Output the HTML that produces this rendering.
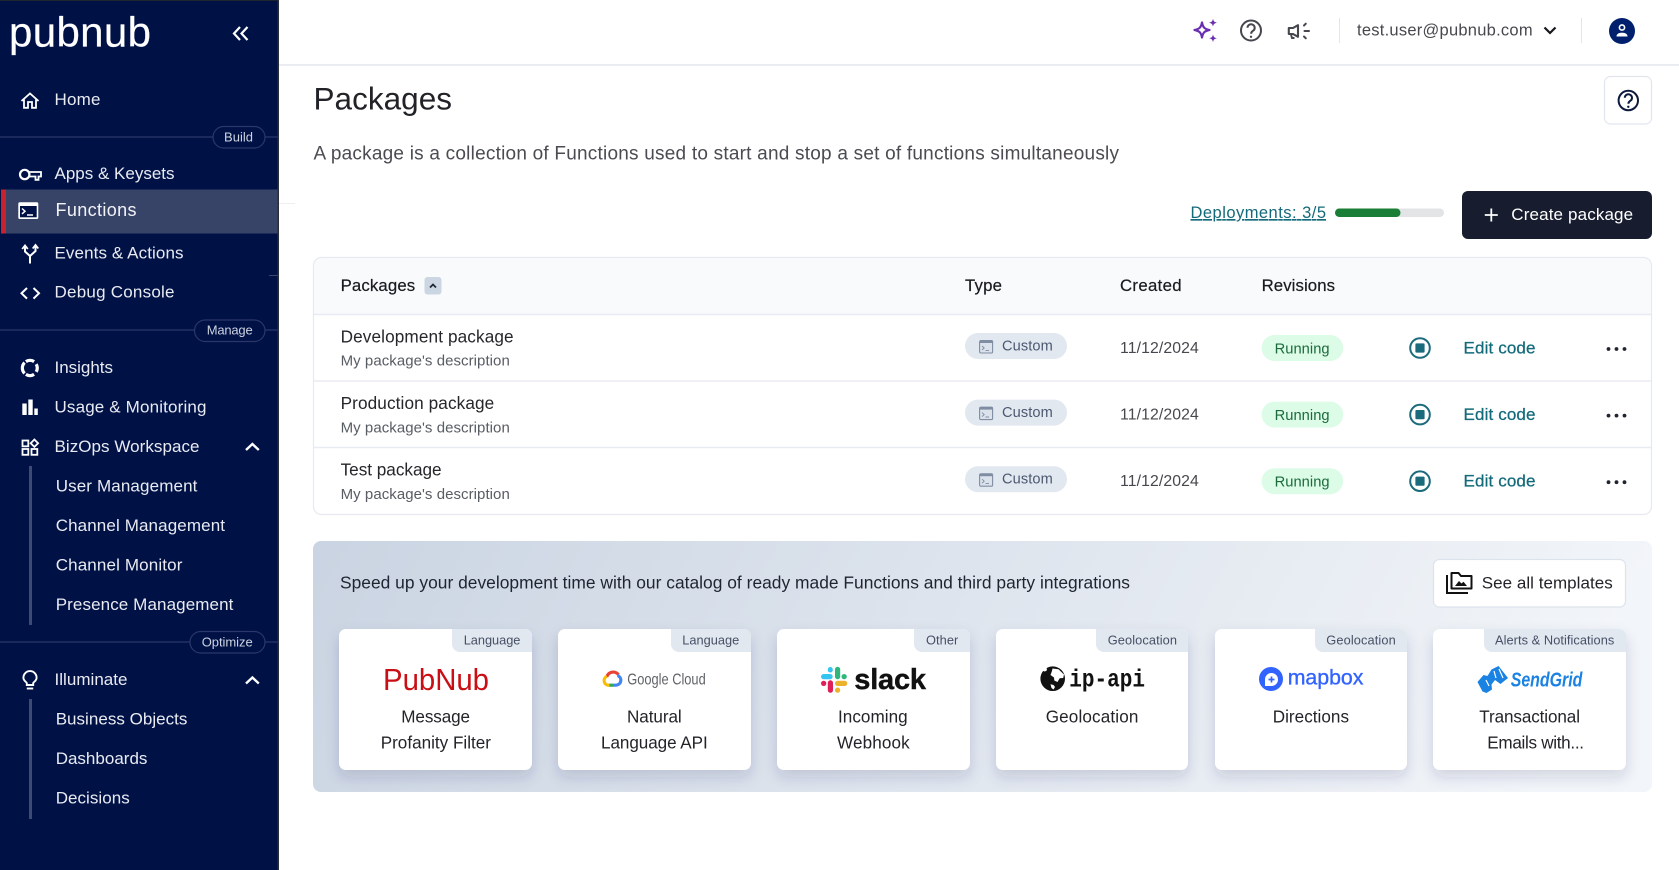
<!DOCTYPE html>
<html lang="en">
<head>
<meta charset="utf-8">
<title>Packages</title>
<style>
html,body{margin:0;padding:0;width:1679px;height:870px;overflow:hidden;background:#fff}
svg{display:block}
text{font-family:"Liberation Sans",Arial,sans-serif;white-space:pre}
.nav{font-size:17px;fill:#e9ebf1}
.sec{font-size:13px;fill:#cdd3e0}
.th{font-size:16.8px;fill:#1b1b1f;stroke:#1b1b1f;stroke-width:.2px}
.nm{font-size:17.2px;fill:#26262b}
.ds{font-size:15px;fill:#585c63}
.cu{font-size:14.6px;fill:#4b5870}
.dt{font-size:15.8px;fill:#46484d}
.ru{font-size:14.7px;fill:#1b6b3c}
.ed{font-size:17px;fill:#136a7a;stroke:#136a7a;stroke-width:.25px}
.ct{font-size:17.1px;fill:#232429}
.tg{font-size:12.8px;fill:#475066}
</style>
</head>
<body>
<svg width="1679" height="870" viewBox="0 0 1679 870" xmlns="http://www.w3.org/2000/svg">
<defs>
<linearGradient id="bn" x1="0" y1="0" x2="1" y2="0.1">
<stop offset="0" stop-color="#cad4e2"/><stop offset="1" stop-color="#f2f5f9"/>
</linearGradient>
<filter id="sh" x="-20%" y="-20%" width="140%" height="150%">
<feDropShadow dx="0" dy="7" stdDeviation="7" flood-color="#24365f" flood-opacity=".16"/>
</filter>
<g id="term">
<rect x="0.6" y="0.6" width="13" height="12.4" rx="1.2" fill="#dbe2ec" stroke="#7f8ca2" stroke-width="1.1"/>
<rect x="0.6" y="0.6" width="13" height="2.4" fill="#7f8ca2"/>
<path d="M3 6l2.200 2L3 10M6.500 10.400h3.500" fill="none" stroke="#7f8ca2" stroke-width=".9"/>
</g>
<g id="stop">
<circle cx="0" cy="0" r="9.800" fill="none" stroke="#1a6b7c" stroke-width="2"/>
<rect x="-4.600" y="-4.600" width="9.200" height="9.200" rx="1" fill="#1a6b7c"/>
</g>
<g id="dots" fill="#1f2430"><circle cx="-8" cy="0" r="1.900"/><circle cx="0" cy="0" r="1.900"/><circle cx="8" cy="0" r="1.900"/></g>
</defs>

<rect width="1679" height="870" fill="#fff"/>

<!-- top bar -->
<rect x="278" y="64" width="1401" height="2" fill="#e9ecf1"/>
<rect x="278" y="203" width="17" height="1" fill="#eceef2"/>
<path d="M1202 22.500c1 5 2.500 6.500 7.500 7.500c-5 1-6.500 2.500-7.500 7.500c-1-5-2.500-6.500-7.500-7.500c5-1 6.500-2.500 7.500-7.500z" fill="none" stroke="#6a2fb0" stroke-width="2.200" stroke-linejoin="round"/>
<path d="M1213 18.800c.6 2.600 1.300 3.300 3.900 3.900c-2.600.6-3.300 1.300-3.900 3.900c-.6-2.600-1.300-3.300-3.900-3.900c2.600-.6 3.300-1.300 3.900-3.900z" fill="#6a2fb0"/>
<path d="M1213 34.400c.6 2.600 1.300 3.300 3.900 3.900c-2.600.6-3.300 1.300-3.900 3.900c-.6-2.600-1.300-3.300-3.900-3.900c2.600-.6 3.300-1.300 3.900-3.900z" fill="#6a2fb0"/>
<circle cx="1251" cy="30.500" r="10" fill="none" stroke="#44474d" stroke-width="2"/>
<path d="M1247.500 27.800a3.600 3.500 0 1 1 5.600 2.900c-1.300.9-2 1.500-2 3" fill="none" stroke="#44474d" stroke-width="2"/>
<circle cx="1251" cy="36.800" r="1.200" fill="#44474d"/>
<path d="M1288.800 28h4.200l5-2.800v11.600l-5-2.800h-4.200z" fill="none" stroke="#44474d" stroke-width="2.100" stroke-linejoin="round"/>
<path d="M1291 34.500l1 3.500h2.500" fill="none" stroke="#44474d" stroke-width="1.900"/>
<path d="M1304 25.500l1.800-1.800M1304.500 31h4.500M1304 36.500l1.800 1.800" stroke="#44474d" stroke-width="2" stroke-linecap="round"/>
<rect x="1339" y="18" width="1" height="25" fill="#e2e5ea"/>
<text x="1357" y="35.500" textLength="175.600" font-size="16.500" fill="#46484d">test.user@pubnub.com</text>
<path d="M1544.500 27.500l5.500 5.500l5.500-5.500" fill="none" stroke="#16181d" stroke-width="2.200"/>
<rect x="1581" y="18" width="1" height="25" fill="#e2e5ea"/>
<circle cx="1622" cy="31" r="13" fill="#00206e"/>
<circle cx="1622" cy="27.500" r="2.600" fill="none" stroke="#fff" stroke-width="1.600"/>
<path d="M1616.500 36.500c0-2.500 2-3.800 5.500-3.800s5.500 1.300 5.500 3.800z" fill="#fff"/>

<!-- page heading -->
<text x="313.500" y="109.500" textLength="138.500" font-size="31.500" fill="#222328">Packages</text>
<text x="313.500" y="159.500" textLength="805.500" font-size="19" fill="#4a4c52">A package is a collection of Functions used to start and stop a set of functions simultaneously</text>
<rect x="1604.500" y="76.500" width="47" height="47.500" rx="6" fill="#fff" stroke="#e1e6ee" stroke-width="1.200"/>
<circle cx="1628.300" cy="100.500" r="9.700" fill="none" stroke="#0e1a3d" stroke-width="2"/>
<path d="M1624.800 97.800a3.600 3.500 0 1 1 5.600 2.900c-1.300.9-2 1.500-2 3" fill="none" stroke="#0e1a3d" stroke-width="2"/>
<circle cx="1628.300" cy="106.800" r="1.200" fill="#0e1a3d"/>

<!-- deployments -->
<text x="1190.500" y="218" textLength="135.500" font-size="16.500" fill="#136a7a" text-decoration="underline">Deployments: 3/5</text>
<rect x="1335" y="208.500" width="109" height="8.500" rx="4.200" fill="#e3e4e6"/>
<rect x="1335" y="208.500" width="65.500" height="8.500" rx="4.200" fill="#1b7e36"/>
<rect x="1462" y="191" width="190" height="48" rx="6" fill="#171d2f"/>
<path d="M1491.300 208.500v13M1484.800 215h13" stroke="#fff" stroke-width="1.800"/>
<text x="1511.300" y="220" textLength="121.800" font-size="17" fill="#fff">Create package</text>

<!-- packages table -->
<rect x="313.500" y="257.500" width="1338" height="257" rx="8" fill="#fff" stroke="#e6eaf0" stroke-width="1.200"/>
<path d="M314 314V266a8 8 0 0 1 8-8H1643a8 8 0 0 1 8 8V314z" fill="#f8fafc"/>
<path d="M314 314.500H1651M314 381H1651M314 447.500H1651" stroke="#e8ecf2" stroke-width="1.500"/>
<text class="th" x="340.600" y="291" textLength="74.600">Packages</text>
<rect x="424.500" y="277" width="17" height="17.500" rx="3" fill="#ccd6e3"/>
<path d="M430 287.500l3-3l3 3" fill="none" stroke="#1d2433" stroke-width="1.700"/>
<text class="th" x="965" y="291" textLength="37">Type</text>
<text class="th" x="1120" y="291" textLength="61.600">Created</text>
<text class="th" x="1261.600" y="291" textLength="73.400">Revisions</text>

<!-- row 1 -->
<text class="nm" x="340.600" y="342.300" textLength="173">Development package</text>
<text class="ds" x="340.600" y="365.700" textLength="169.200">My package's description</text>
<rect x="965" y="333" width="102" height="26" rx="13" fill="#e2e8f0"/>
<use href="#term" x="979" y="340"/>
<text class="cu" x="1002" y="350.300" textLength="50.800">Custom</text>
<text class="dt" x="1120" y="353" textLength="78.800">11/12/2024</text>
<rect x="1261.600" y="335" width="81.600" height="26" rx="13" fill="#dcfce7"/>
<text class="ru" x="1274.600" y="353.300" textLength="55">Running</text>
<use href="#stop" x="1420" y="348"/>
<text class="ed" x="1463.500" y="353.500" textLength="72">Edit code</text>
<use href="#dots" x="1616.500" y="349"/>

<!-- row 2 -->
<text class="nm" x="340.600" y="409" textLength="153.600">Production package</text>
<text class="ds" x="340.600" y="432.300" textLength="169.200">My package's description</text>
<rect x="965" y="399.600" width="102" height="26" rx="13" fill="#e2e8f0"/>
<use href="#term" x="979" y="406.600"/>
<text class="cu" x="1002" y="416.900" textLength="50.800">Custom</text>
<text class="dt" x="1120" y="419.600" textLength="78.800">11/12/2024</text>
<rect x="1261.600" y="401.600" width="81.600" height="26" rx="13" fill="#dcfce7"/>
<text class="ru" x="1274.600" y="419.900" textLength="55">Running</text>
<use href="#stop" x="1420" y="414.600"/>
<text class="ed" x="1463.500" y="420.100" textLength="72">Edit code</text>
<use href="#dots" x="1616.500" y="415.600"/>

<!-- row 3 -->
<text class="nm" x="340.600" y="475.600" textLength="101">Test package</text>
<text class="ds" x="340.600" y="499" textLength="169.200">My package's description</text>
<rect x="965" y="466.200" width="102" height="26" rx="13" fill="#e2e8f0"/>
<use href="#term" x="979" y="473.200"/>
<text class="cu" x="1002" y="483.500" textLength="50.800">Custom</text>
<text class="dt" x="1120" y="486.200" textLength="78.800">11/12/2024</text>
<rect x="1261.600" y="468.200" width="81.600" height="26" rx="13" fill="#dcfce7"/>
<text class="ru" x="1274.600" y="486.500" textLength="55">Running</text>
<use href="#stop" x="1420" y="481.200"/>
<text class="ed" x="1463.500" y="486.700" textLength="72">Edit code</text>
<use href="#dots" x="1616.500" y="482.200"/>

<!-- templates banner -->
<rect x="313" y="541" width="1339" height="251" rx="8" fill="url(#bn)"/>
<text x="340" y="588.500" textLength="790" font-size="17.400" fill="#1f2530">Speed up your development time with our catalog of ready made Functions and third party integrations</text>
<rect x="1433.500" y="559.500" width="192" height="47.500" rx="6" fill="#fff" stroke="#dde3ec" stroke-width="1.200"/>
<path d="M1447 575v18h21" fill="none" stroke="#111" stroke-width="2"/>
<path d="M1451.500 588.500V573h7l2.500 3h10.500v12.500z" fill="none" stroke="#111" stroke-width="2" stroke-linejoin="round"/>
<path d="M1455 586l4-5l2.500 2.500l2-1.800l3.500 4.300z" fill="#111"/>
<text x="1481.700" y="588.300" textLength="131" font-size="17" fill="#232429">See all templates</text>

<!-- card 1 -->
<g filter="url(#sh)"><rect x="339" y="629" width="193" height="141" rx="7" fill="#fff"/></g>
<path d="M452 629H525a7 7 0 0 1 7 7v16H460a8 8 0 0 1-8-8z" fill="#e2e8f0"/>
<text class="tg" x="463.700" y="644.300" textLength="56.700">Language</text>
<text x="383" y="690" textLength="106" lengthAdjust="spacingAndGlyphs" font-size="31" fill="#c90f14">PubNub</text>
<text class="ct" x="401.300" y="722.300" textLength="68.700">Message</text>
<text class="ct" x="380.700" y="748.700" textLength="110.300">Profanity Filter</text>

<!-- card 2 -->
<g filter="url(#sh)"><rect x="558" y="629" width="193" height="141" rx="7" fill="#fff"/></g>
<path d="M671 629H744a7 7 0 0 1 7 7v16H679a8 8 0 0 1-8-8z" fill="#e2e8f0"/>
<text class="tg" x="682.300" y="644.300" textLength="57">Language</text>
<g fill="none" stroke-width="3.200">
<path d="M606.800 677A6.600 6.600 0 0 1 618.500 674.800" stroke="#ea4335"/>
<path d="M617.500 675.500A5 5 0 0 1 616.200 685.200H612.500" stroke="#4285f4"/>
<path d="M613 685.200H609" stroke="#34a853"/>
<path d="M609.500 685.200A4.700 4.700 0 0 1 606.800 676.300" stroke="#fbbc05"/>
</g>
<text x="627.300" y="684.300" textLength="78.400" lengthAdjust="spacingAndGlyphs" font-size="16" fill="#5f6368">Google Cloud</text>
<text class="ct" x="627" y="722.300" textLength="54.700">Natural</text>
<text class="ct" x="601" y="748.700" textLength="106.700">Language API</text>

<!-- card 3 -->
<g filter="url(#sh)"><rect x="777" y="629" width="193" height="141" rx="7" fill="#fff"/></g>
<path d="M914 629H963a7 7 0 0 1 7 7v16H922a8 8 0 0 1-8-8z" fill="#e2e8f0"/>
<text class="tg" x="926" y="644.300" textLength="32.300">Other</text>
<rect x="821" y="674" width="11.700" height="5.300" rx="2.650" fill="#36c5f0"/>
<rect x="827.800" y="667" width="5" height="5.500" rx="2.500" fill="#36c5f0"/>
<rect x="835" y="666.700" width="5.200" height="12.600" rx="2.600" fill="#2eb67d"/>
<rect x="841.500" y="674" width="5.300" height="5.300" rx="2.600" fill="#2eb67d"/>
<rect x="835" y="680.700" width="12.300" height="5.300" rx="2.650" fill="#ecb22e"/>
<rect x="835" y="687.500" width="5.200" height="5.300" rx="2.600" fill="#ecb22e"/>
<rect x="827.800" y="680.300" width="5.200" height="12.500" rx="2.600" fill="#e01e5a"/>
<rect x="821" y="680.700" width="5.300" height="5.300" rx="2.600" fill="#e01e5a"/>
<text x="854.300" y="689" textLength="71.700" font-size="29" font-weight="700" fill="#111" stroke="#111" stroke-width=".4">slack</text>
<text class="ct" x="838" y="722.300" textLength="69.700">Incoming</text>
<text class="ct" x="837" y="748.700" textLength="72.700">Webhook</text>

<!-- card 4 -->
<g filter="url(#sh)"><rect x="996" y="629" width="192" height="141" rx="7" fill="#fff"/></g>
<path d="M1096 629H1181a7 7 0 0 1 7 7v16H1104a8 8 0 0 1-8-8z" fill="#e2e8f0"/>
<text class="tg" x="1107.700" y="644.300" textLength="69.300">Geolocation</text>
<circle cx="1052.700" cy="678.700" r="12.300" fill="#111"/>
<path d="M1052.500 668.500l6 .8l5.500 5.200l-.8 3.500l-3.500.2l-2.200 3.800l-3.200-1.500l-.3-3l-3.500-2.500l1.300-3.500zM1050.500 684.200l3 .8l1.500 2l-1.500 2.500l-2-1.500zM1044 668l2.500-.8l.5 3l-2 1.300l-2-.5z" fill="#fff"/>
<text x="1069.300" y="686.700" textLength="75.700" lengthAdjust="spacingAndGlyphs" font-size="25" font-weight="700" fill="#111" style="font-family:'Liberation Mono',monospace">ip-api</text>
<text class="ct" x="1045.700" y="722.300" textLength="92.700">Geolocation</text>

<!-- card 5 -->
<g filter="url(#sh)"><rect x="1215" y="629" width="192" height="141" rx="7" fill="#fff"/></g>
<path d="M1315 629H1400a7 7 0 0 1 7 7v16H1323a8 8 0 0 1-8-8z" fill="#e2e8f0"/>
<text class="tg" x="1326.300" y="644.300" textLength="69.400">Geolocation</text>
<circle cx="1271" cy="679" r="12" fill="#3163ff"/>
<path d="M1265 686v-6.500a6.500 6.500 0 1 1 6.500 6.500z" fill="#fff"/>
<path d="M1271.500 676.500v6M1268.500 679.500h6" stroke="#3163ff" stroke-width="1.700"/>
<text x="1287.700" y="684.300" textLength="75.700" font-size="21.300" fill="#3163ff" stroke="#3163ff" stroke-width=".35">mapbox</text>
<text class="ct" x="1272.700" y="722.300" textLength="76.300">Directions</text>

<!-- card 6 -->
<g filter="url(#sh)"><rect x="1433" y="629" width="193" height="141" rx="7" fill="#fff"/></g>
<path d="M1484 629H1619a7 7 0 0 1 7 7v16H1492a8 8 0 0 1-8-8z" fill="#e2e8f0"/>
<text class="tg" x="1495" y="644.300" textLength="119.300">Alerts &amp; Notifications</text>
<path d="M1477.500 682l6-7l4 1l4-6.500l7-3.500l9.500 12l-7.500 6l-5.500-4l-3.500 4.500l.5 5l-5.500 3.500l-4-1.500z" fill="#1a82e2"/>
<path d="M1486 680l3 6M1494 671l2 7M1499 669l4 9" stroke="#fff" stroke-width="1.200" fill="none"/>
<text x="1510.700" y="686.700" textLength="71.700" lengthAdjust="spacingAndGlyphs" font-size="20" font-weight="700" font-style="italic" fill="#1a82e2">SendGrid</text>
<text class="ct" x="1479.300" y="722.300" textLength="100.700">Transactional</text>
<text class="ct" x="1487.300" y="748.700" textLength="96.700">Emails with...</text>

<!-- sidebar -->
<rect x="0" y="0" width="278" height="870" fill="#001146"/>
<rect x="277.500" y="0" width="1.500" height="870" fill="#2b2f3a"/>
<rect x="0" y="0" width="278" height="1" fill="#20242e"/>
<text x="9" y="46.500" textLength="142" font-size="42" fill="#fff" stroke="#fff" stroke-width=".2">pubnub</text>
<path d="M240 27l-6 6.500l6 6.500M247.500 27l-6 6.500l6 6.500" fill="none" stroke="#fff" stroke-width="2.200"/>

<!-- home -->
<path d="M21.500 101L30 93.500L38.500 101M24 99.500V107.800H28V102H32V107.800H36V99.500" fill="none" stroke="#fff" stroke-width="1.800"/>
<text class="nav" x="54.500" y="105" textLength="46">Home</text>

<!-- build -->
<path d="M0 137H278" stroke="#2a376a" stroke-width="1.200"/>
<rect x="213" y="126.500" width="52" height="21.500" rx="10.700" fill="#001146" stroke="#2a376a" stroke-width="1.200"/>
<text class="sec" x="224" y="141.700" textLength="29">Build</text>

<!-- apps -->
<circle cx="24.700" cy="174.500" r="4.700" fill="none" stroke="#fff" stroke-width="2.200"/>
<path d="M29.500 172H41V176.500H38.500V179.800H35.500V176.500H29.500" fill="none" stroke="#fff" stroke-width="1.800"/>
<text class="nav" x="54.500" y="179" textLength="120">Apps &amp; Keysets</text>

<!-- functions (active) -->
<rect x="6" y="189.500" width="271.500" height="44" fill="#384368"/>
<rect x="1" y="189.500" width="5" height="44" fill="#c8222f"/>
<rect x="18.300" y="202.300" width="20" height="16.700" rx="1.500" fill="#fff"/>
<rect x="20" y="206" width="16.700" height="11.300" fill="#001146"/>
<path d="M22 208.500l3 2.700l-3 2.700M27 215h6" fill="none" stroke="#fff" stroke-width="1.500"/>
<text x="55.500" y="216" textLength="81" font-size="18" fill="#f2f3f7">Functions</text>

<!-- events -->
<path d="M30 263.500V256L25 251.500V246M30 256L35.500 251V245.500" fill="none" stroke="#fff" stroke-width="2"/>
<path d="M22.200 249l2.800-3.500l2.800 3.500M32.700 248.500l2.800-3.500l2.800 3.500" fill="none" stroke="#fff" stroke-width="1.800"/>
<text class="nav" x="54.500" y="258.300" textLength="129">Events &amp; Actions</text>
<rect x="269" y="275" width="9" height="1" fill="#3a4568"/>

<!-- debug -->
<path d="M27 288l-5.500 5.300L27 298.600M33.500 288l5.500 5.300l-5.500 5.300" fill="none" stroke="#fff" stroke-width="2"/>
<text class="nav" x="54.500" y="297.700" textLength="120">Debug Console</text>

<!-- manage -->
<path d="M0 330H278" stroke="#2a376a" stroke-width="1.200"/>
<rect x="194.500" y="320" width="70.500" height="21.500" rx="10.700" fill="#001146" stroke="#2a376a" stroke-width="1.200"/>
<text class="sec" x="206.700" y="334.500" textLength="46">Manage</text>

<!-- insights -->
<g fill="none" stroke="#fff" stroke-width="3.200">
<path d="M24.600 362.600A7.600 7.600 0 0 0 24.600 373.400"/>
<path d="M25.900 361.600A7.600 7.600 0 0 1 34.100 361.600"/>
<path d="M25.900 374.400A7.600 7.600 0 0 0 34.100 374.400"/>
<path d="M36.200 364.200A7.600 7.600 0 0 1 36.200 371.800"/>
</g>
<text class="nav" x="54.500" y="373" textLength="58.500">Insights</text>

<!-- usage -->
<path d="M22.300 403.500h4.400V415h-4.400zM28.300 399.500h4.400V415h-4.400zM34.300 408.500h3.500V415h-3.500z" fill="#fff"/>
<text class="nav" x="54.500" y="412.300" textLength="152">Usage &amp; Monitoring</text>

<!-- bizops -->
<g fill="none" stroke="#fff" stroke-width="1.800">
<rect x="22.500" y="440.500" width="5.800" height="5.800"/>
<rect x="22.500" y="449" width="5.800" height="5.800"/>
<rect x="31.500" y="449" width="5.800" height="5.800"/>
<path d="M34.400 439.500l3.700 3.700l-3.700 3.700l-3.700-3.700z"/>
</g>
<text class="nav" x="54.500" y="452" textLength="145">BizOps Workspace</text>
<path d="M246 450l6.400-6l6.400 6" fill="none" stroke="#fff" stroke-width="2.400"/>
<rect x="29" y="466" width="3" height="159" fill="#3f4a72"/>
<text class="nav" x="55.700" y="491.700" textLength="141.700">User Management</text>
<text class="nav" x="55.700" y="531" textLength="169.300">Channel Management</text>
<text class="nav" x="55.700" y="570.700" textLength="126.700">Channel Monitor</text>
<text class="nav" x="55.700" y="610" textLength="177.700">Presence Management</text>

<!-- optimize -->
<path d="M0 642H278" stroke="#2a376a" stroke-width="1.200"/>
<rect x="190" y="631.500" width="75" height="21.500" rx="10.700" fill="#001146" stroke="#2a376a" stroke-width="1.200"/>
<text class="sec" x="201.700" y="646.300" textLength="51">Optimize</text>

<!-- illuminate -->
<path d="M26.800 685v-1.800c0-1.200-3.400-2.200-3.400-5.500a6.600 6.600 0 1 1 13.200 0c0 3.300-3.400 4.300-3.400 5.500V685z" fill="none" stroke="#fff" stroke-width="1.900"/>
<path d="M26.800 688.500h6.400" stroke="#fff" stroke-width="1.900"/>
<text class="nav" x="54.500" y="685" textLength="73">Illuminate</text>
<path d="M246 683.500l6.400-6l6.400 6" fill="none" stroke="#fff" stroke-width="2.400"/>
<rect x="29" y="699" width="3" height="120" fill="#3f4a72"/>
<text class="nav" x="55.700" y="724.700" textLength="131.700">Business Objects</text>
<text class="nav" x="55.700" y="764" textLength="91.700">Dashboards</text>
<text class="nav" x="55.700" y="803.300" textLength="74">Decisions</text>
</svg>
</body>
</html>
